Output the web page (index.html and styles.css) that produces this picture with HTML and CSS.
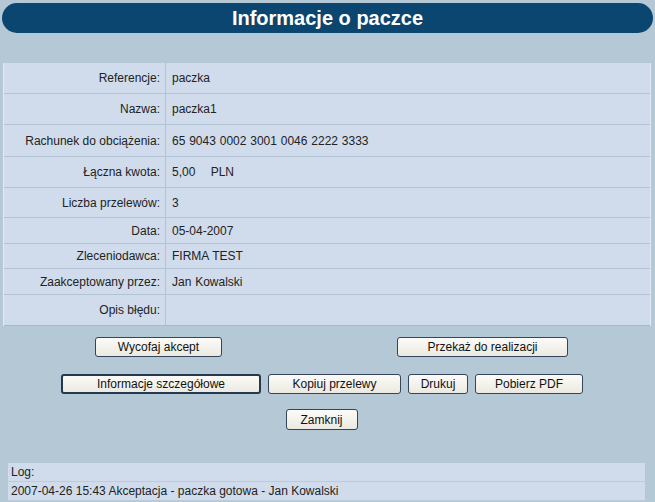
FILE: index.html
```html
<!DOCTYPE html>
<html lang="pl">
<head>
    <meta charset="UTF-8">
    <meta name="viewport" content="width=device-width, initial-scale=1.0">
    <title>Informacje o paczce</title>
    <link rel="stylesheet" href="styles.css">
</head>
<body>
    <h1 class="title">Informacje o paczce</h1>

    <div class="details">
        <div class="row tall"><span class="label">Referencje:</span><span class="value">paczka</span></div>
        <div class="row tall"><span class="label">Nazwa:</span><span class="value">paczka1</span></div>
        <div class="row taller"><span class="label">Rachunek do obciążenia:</span><span class="value">65 9043 0002 3001 0046 2222 3333</span></div>
        <div class="row tall"><span class="label">Łączna kwota:</span><span class="value">5,00 &nbsp;&nbsp; PLN</span></div>
        <div class="row mid"><span class="label">Liczba przelewów:</span><span class="value">3</span></div>
        <div class="row"><span class="label">Data:</span><span class="value">05-04-2007</span></div>
        <div class="row short"><span class="label">Zleceniodawca:</span><span class="value">FIRMA TEST</span></div>
        <div class="row"><span class="label">Zaakceptowany przez:</span><span class="value">Jan Kowalski</span></div>
        <div class="row tall last"><span class="label">Opis błędu:</span><span class="value"></span></div>
    </div>

    <div class="actions first">
        <span class="cell left"><button type="button" class="btn wide">Wycofaj akcept</button></span>
        <span class="cell right"><button type="button" class="btn wider">Przekaż do realizacji</button></span>
    </div>
    <div class="actions second">
        <button type="button" class="btn focus">Informacje szczegółowe</button>
        <button type="button" class="btn copy">Kopiuj przelewy</button>
        <button type="button" class="btn print">Drukuj</button>
        <button type="button" class="btn pdf">Pobierz PDF</button>
    </div>
    <div class="actions third">
        <button type="button" class="btn close">Zamknij</button>
    </div>

    <div class="log">
        <div class="log-row">Log:</div>
        <div class="log-row">2007-04-26 15:43 Akceptacja - paczka gotowa - Jan Kowalski</div>
    </div>
</body>
</html>
```

FILE: styles.css
```css
* {
    box-sizing: border-box;
}

body {
    margin: 0;
    background-color: #b5c8d6;
    font-family: "Liberation Sans", Arial, sans-serif;
    font-size: 12px;
    color: #222;
}

.title {
    margin: 3px 2px 0;
    height: 30px;
    line-height: 30px;
    border-radius: 15px;
    background-color: #0b4670;
    color: #fff;
    text-align: center;
    font-size: 20px;
    font-weight: bold;
}

.details {
    margin: 30px 4px 0 3px;
    background-color: #d0dcec;
    border-left: 1px solid #e2eaf4;
    border-right: 1px solid #e2eaf4;
}

.row {
    display: grid;
    grid-template-columns: 162px 1fr;
    height: 26px;
    border-bottom: 1px solid #b2c3d6;
}

.row.tall { height: 31px; }
.row.taller { height: 32px; }
.row.mid { height: 30px; }
.row.short { height: 25px; }

.row.last {
    border-bottom: 1px solid #a5b8cc;
}

.label,
.value {
    display: flex;
    align-items: center;
}

.label {
    justify-content: flex-end;
    padding-right: 5px;
    border-right: 1px solid #b2c3d6;
}

.value {
    padding-left: 6px;
    word-spacing: 0.5px;
}

.actions {
    display: flex;
    justify-content: center;
}

.actions.first {
    margin-top: 11px;
    display: grid;
    grid-template-columns: 320px 1fr;
}

.cell.left {
    padding-left: 95px;
}

.cell.right {
    padding-left: 77px;
}

.actions.second {
    margin-top: 17px;
    gap: 7px;
    padding-right: 11px;
}

.actions.third {
    margin-top: 15px;
    padding-right: 12px;
}

.btn {
    height: 20px;
    padding: 0;
    font-family: "Liberation Sans", Arial, sans-serif;
    font-size: 12px;
    color: #111;
    background: linear-gradient(#fcfbf8, #ece9e1);
    border: 1px solid #35445a;
    border-radius: 3px;
}

.btn.wide { width: 127px; }
.btn.wider { width: 171px; }
.btn.focus { width: 200px; border-width: 2px; border-color: #24384f; }
.btn.copy { width: 133px; }
.btn.print { width: 60px; }
.btn.pdf { width: 108px; }
.btn.close { width: 72px; height: 21px; }

.log {
    margin: 33px 10px 0 8px;
}

.log-row {
    height: 19px;
    line-height: 19px;
    padding-left: 3px;
    background-color: #d0dcec;
    border-bottom: 1px solid #bccbdc;
}
```
